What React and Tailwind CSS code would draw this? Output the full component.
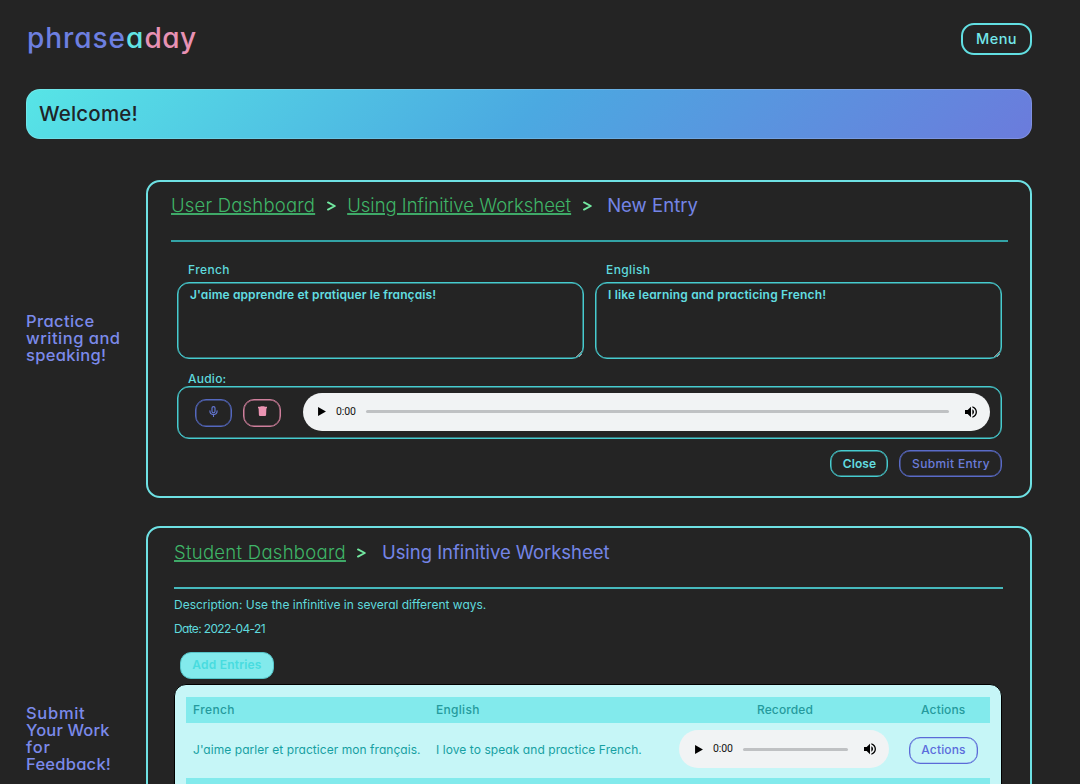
const PlayIcon = () => (
  <svg className="h-[9px] w-[8px] shrink-0" viewBox="0 0 7 8">
    <path d="M0 0L7 4L0 8Z" fill="#000" />
  </svg>
);

const VolumeIcon = () => (
  <svg className="h-[16px] w-[16px] shrink-0" viewBox="0 0 24 24" fill="#000">
    <path d="M3 9v6h4l5 5V4L7 9H3zm13.5 3c0-1.77-1.02-3.29-2.5-4.03v8.05c1.48-.73 2.5-2.25 2.5-4.02zM14 3.23v2.06c2.89.86 5 3.54 5 6.71s-2.11 5.85-5 6.71v2.06c4.01-.91 7-4.49 7-8.77s-2.99-7.86-7-8.77z" />
  </svg>
);

const MicIcon = () => (
  <svg className="h-[11px] w-[9px]" viewBox="0 0 9 11" fill="none" stroke="#6376d2" strokeWidth="1.15" strokeLinecap="round">
    <rect x="3" y="0.6" width="3" height="6.2" rx="1.5" />
    <path d="M0.9 4.8c0 2.4 1.5 3.8 3.6 3.8s3.6-1.4 3.6-3.8M4.5 8.6v1.8" />
  </svg>
);

const TrashIcon = () => (
  <svg className="h-[10px] w-[9px]" viewBox="0 0 9 10" fill="#ea93b2">
    <path d="M2.7 0.2h3.6l0.4 0.6H9v1.4H0V0.8h2.3z" />
    <path d="M0.6 2h7.8l-0.3 7.1a0.8 0.8 0 0 1-0.8 0.8H1.7a0.8 0.8 0 0 1-0.8-0.8z" />
  </svg>
);

const ResizeGrip = () => (
  <svg className="absolute right-[1px] bottom-[1px] h-[6px] w-[6px]" viewBox="0 0 6 6" stroke="#a3a3a3" strokeWidth="0.9">
    <path d="M0 6L6 0M3 6L6 3" />
  </svg>
);

function Player({ className }) {
  return (
    <div className={`flex h-[38px] items-center rounded-full bg-[#f1f3f4] pr-[11px] ${className}`}>
      <PlayIcon />
      <span className="ml-[10px] w-[20px] font-['Roboto',sans-serif] text-[10.5px] leading-[14px] tracking-[-0.1px] text-[#111]">0:00</span>
      <div className="ml-[10px] h-[3px] flex-1 rounded-full bg-[#bfc1c3]" />
      <div className="ml-[14px] flex">
        <VolumeIcon />
      </div>
    </div>
  );
}

const Chevron = () => (
  <span className="flex w-[32px] shrink-0 justify-center">
    <svg className="h-[10px] w-[9px]" viewBox="0 0 9 10" fill="none" stroke="#72e8a0" strokeWidth="1.9" strokeLinecap="round" strokeLinejoin="round">
      <path d="M1 1.4L7.8 5L1 8.6" />
    </svg>
  </span>
);

const crumbLink = 'font-light text-[#3fb567] underline decoration-[#3fa968] decoration-2 underline-offset-[1px]';
const outline = 'border border-[#46cbcf] shadow-[inset_0_0_0_0.5px_#46cbcf]';

function Field({ label, value, labelTracking, valueTracking }) {
  return (
    <div className="w-[407px]">
      <div className={`pl-[11px] text-[12px] leading-[14px] font-medium text-[#5fdadd] ${labelTracking}`}>{label}</div>
      <div className={`relative mt-[5px] h-[77px] rounded-[12px] pt-[3px] pl-[12px] text-[12px] leading-[17px] font-semibold text-[#62dde0] ${outline} ${valueTracking}`}>
        {value}
        <ResizeGrip />
      </div>
    </div>
  );
}

export default function App() {
  return (
    <div className="h-[784px] w-[1080px] overflow-hidden bg-[#242424] pr-[48px] pl-[26px] font-['Inter',sans-serif] [font-feature-settings:'cv11']">
      <header className="flex h-[89px] items-start justify-between pt-[23px]">
        <div className="mt-px ml-px text-[28px] leading-[29px] font-medium">
          <span className="tracking-[0.95px] text-[#6d7fe0]">phrase</span>
          <span className="tracking-[1.1px] text-[#62e4e6]">a</span>
          <span className="tracking-[0.5px] text-[#e892b4]">day</span>
        </div>
        <button className="h-[32px] w-[71px] rounded-[13px] border-2 border-[#62dfe2] pb-px text-[14.5px] leading-[20px] font-medium tracking-[0.4px] text-[#74e8ea]">Menu</button>
      </header>

      <div className="h-[50px] rounded-[14px] border border-white/15 bg-[linear-gradient(135deg,#57e5e6_0%,#4ba9e1_50%,#6b7bdc_100%)] bg-origin-border pt-[12px] pl-[12px] text-[20.5px] leading-[23px] font-medium tracking-[0.2px] text-[#1f2428]">
        Welcome!
      </div>

      <section className="mt-[41px] flex h-[318px]">
        <h2 className="flex w-[120px] flex-col justify-center pb-[2px] text-[16.5px] leading-[17px] font-medium text-[#7b8aea]">
          <span className="tracking-[0.4px]">Practice</span>
          <span className="tracking-[0.5px]">writing and</span>
          <span className="tracking-[0.3px]">speaking!</span>
        </h2>
        <div className="w-[886px] rounded-[14px] border-2 border-[#6ee1e4] pt-[12px] pr-[22px] pl-[23px]">
          <nav className="flex h-[23px] items-center text-[18.5px] leading-[23px] whitespace-nowrap">
            <a className={`tracking-[0.2px] ${crumbLink}`}>User Dashboard</a>
            <Chevron />
            <a className={crumbLink}>Using Infinitive Worksheet</a>
            <Chevron />
            <span className="ml-[4px] tracking-[0.05px] text-[#7485e6]">New Entry</span>
          </nav>
          <div className="mt-[23px] h-[2px] bg-[#33a3a6]" />
          <div className="pt-[21px] pr-[6px] pl-[6px]">
            <div className="flex justify-between">
              <Field label="French" value="J'aime apprendre et pratiquer le français!" labelTracking="tracking-[0.4px]" valueTracking="tracking-[0.1px]" />
              <Field label="English" value="I like learning and practicing French!" labelTracking="tracking-[0.4px]" valueTracking="tracking-[0.18px]" />
            </div>
            <div className="mt-[13px] pl-[11px] text-[12px] leading-[14px] font-medium tracking-[0.24px] text-[#5fdadd]">Audio:</div>
            <div className={`flex h-[53px] items-center rounded-[12px] pr-[11px] pl-[17px] ${outline}`}>
              <button className="flex h-[28px] w-[37px] items-center justify-center rounded-[11px] border border-[#5468bf] pb-[3px] shadow-[inset_0_0_0_0.5px_#5468bf]">
                <MicIcon />
              </button>
              <button className="ml-[11px] flex h-[28px] w-[38px] items-center justify-center rounded-[11px] border border-[#cf7f9c] pb-[3px] shadow-[inset_0_0_0_0.5px_#cf7f9c]">
                <TrashIcon />
              </button>
              <Player className="mb-[2px] ml-[22px] flex-1 pl-[15px]" />
            </div>
            <div className="mt-[11px] flex justify-end gap-[11px] text-[12px] leading-[14px]">
              <button className={`h-[27px] w-[58px] rounded-[11px] pl-px font-semibold tracking-[0.1px] text-[#62dde0] ${outline}`}>Close</button>
              <button className="h-[27px] w-[103px] rounded-[11px] border border-[#5a6bc8] pl-px font-medium tracking-[0.35px] text-[#6b7cda] shadow-[inset_0_0_0_0.5px_#5a6bc8]">Submit Entry</button>
            </div>
          </div>
        </div>
      </section>

      <section className="mt-[28px] flex h-[426px]">
        <h2 className="flex w-[120px] flex-col justify-center text-[16.5px] leading-[17px] font-medium text-[#7b8aea]">
          <span className="tracking-[0.7px]">Submit</span>
          <span className="tracking-[0.15px]">Your Work</span>
          <span className="tracking-[0.9px]">for</span>
          <span className="tracking-[0.25px]">Feedback!</span>
        </h2>
        <div className="w-[886px] rounded-[14px] border-2 border-[#6ee1e4] pt-[13px] pr-[27px] pl-[26px]">
          <nav className="flex h-[23px] items-center text-[18.5px] leading-[23px] whitespace-nowrap">
            <a className={`tracking-[0.28px] ${crumbLink}`}>Student Dashboard</a>
            <Chevron />
            <span className="ml-[4px] tracking-[-0.05px] text-[#7485e6]">Using Infinitive Worksheet</span>
          </nav>
          <div className="mt-[23px] h-[2px] bg-[#46b9bd]" />
          <p className="mt-[8px] text-[12px] leading-[16px] text-[#5fdadd]">Description: Use the infinitive in several different ways.</p>
          <p className="mt-[8px] text-[12px] leading-[16px] tracking-[-0.65px] text-[#5fdadd]">Date: 2022-04-21</p>
          <button className="mt-[15px] ml-[6px] block h-[27px] w-[94px] rounded-[11px] border border-[#55c4c8] bg-[#82eaec] pb-[2px] text-[12px] leading-[14px] font-semibold tracking-[0.2px] text-[#48dcdf]">Add Entries</button>
          <div className="mt-[5px] h-[240px] w-[828px] rounded-[12px] border border-black bg-[#c6f6f7] px-[11px] pt-[12px] text-[12px] leading-[14px]">
            <div className="grid h-[26px] grid-cols-[243px_321px_164px_1fr] items-center bg-[#82eaec] pb-px pl-[7px] font-medium text-[#259a9d]">
              <span className="tracking-[0.4px]">French</span>
              <span className="tracking-[0.3px]">English</span>
              <span className="tracking-[0.1px]">Recorded</span>
              <span className="tracking-[0.16px]">Actions</span>
            </div>
            <div className="grid h-[55px] grid-cols-[243px_243px_230px_1fr] items-center pl-[7px] text-[#16a0a2]">
              <span className="pb-px tracking-[0.05px]">J'aime parler et practicer mon français.</span>
              <span className="pb-px tracking-[0.07px]">I love to speak and practice French.</span>
              <Player className="mb-[3px] w-[210px] pl-[16px]" />
              <button className="h-[27px] w-[69px] rounded-[11px] border border-[#5b6ad8] pb-px font-medium tracking-[0.16px] text-[#5b6cdc] shadow-[inset_0_0_0_0.3px_#5b6ad8]">Actions</button>
            </div>
            <div className="h-[26px] bg-[#82eaec]" />
          </div>
        </div>
      </section>
    </div>
  );
}
